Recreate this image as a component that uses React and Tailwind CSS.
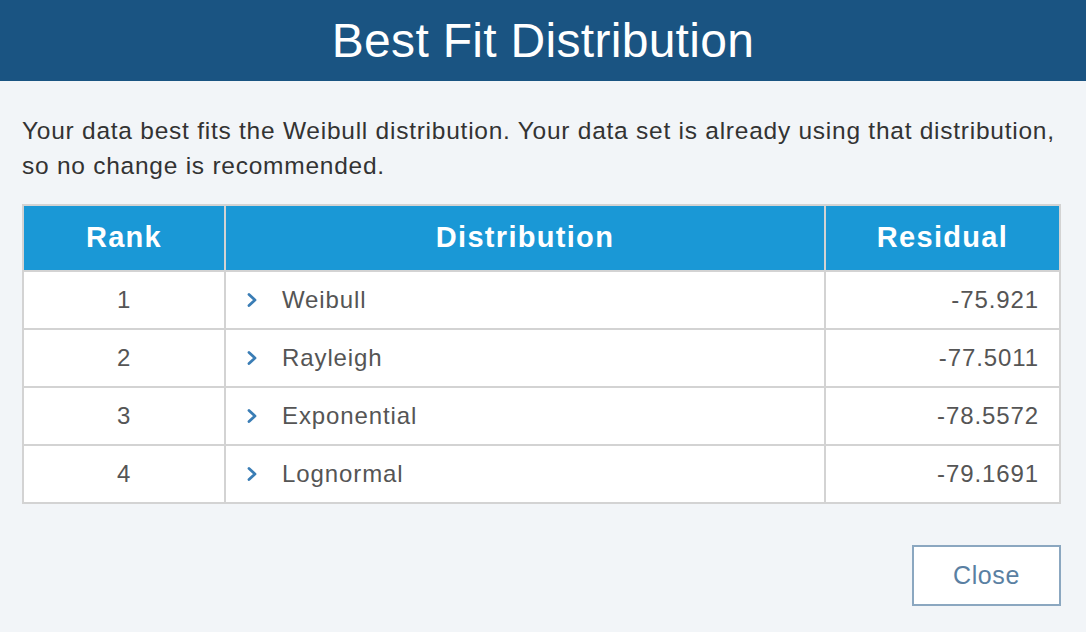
import React from 'react'

const rows = [
  { rank: 1, name: 'Weibull', residual: '-75.921' },
  { rank: 2, name: 'Rayleigh', residual: '-77.5011' },
  { rank: 3, name: 'Exponential', residual: '-78.5572' },
  { rank: 4, name: 'Lognormal', residual: '-79.1691' },
]

const Chevron = () => (
  <svg width="12" height="16" viewBox="0 0 12 16" className="shrink-0">
    <path d="M3 2.5 L9 8 L3 13.5" fill="none" stroke="#3a7db5" strokeWidth="2.8" strokeLinecap="round" strokeLinejoin="round" />
  </svg>
)

const App = () => {
  return (
    <div className="w-[1086px] h-[632px] bg-[#f2f5f8] flex flex-col overflow-hidden" style={{ fontFamily: '"Liberation Sans", Arial, sans-serif' }}>
      <div className="h-[81px] bg-[#1a5482] flex items-center justify-center shrink-0">
        <h1 className="text-white text-[48px] tracking-[0.3px] leading-none">Best Fit Distribution</h1>
      </div>
      <div className="px-[22px] pt-[32px] flex flex-col">
        <p className="text-[24.5px] tracking-[0.75px] leading-[35px] text-[#333] whitespace-nowrap">
          Your data best fits the Weibull distribution. Your data set is already using that distribution,<br />
          so no change is recommended.
        </p>
        <table className="mt-[21px] w-[1039px] border-collapse border-2 border-[#d3d3d3] bg-white">
          <thead>
            <tr className="h-[66px] bg-[#1a98d6] text-white text-[29px] tracking-[1.3px] font-bold">
              <th className="w-[202px] border-2 border-[#d3d3d3] font-bold">Rank</th>
              <th className="w-[600px] border-2 border-[#d3d3d3] font-bold">Distribution</th>
              <th className="border-2 border-[#d3d3d3] font-bold">Residual</th>
            </tr>
          </thead>
          <tbody>
            {rows.map((r) => (
              <tr key={r.rank} className="h-[58px] text-[24px] tracking-[0.9px] text-[#555]">
                <td className="border-2 border-[#d3d3d3] text-center">{r.rank}</td>
                <td className="border-2 border-[#d3d3d3] pl-[20px]">
                  <div className="flex items-center gap-[24px]">
                    <Chevron />
                    <span>{r.name}</span>
                  </div>
                </td>
                <td className="border-2 border-[#d3d3d3] text-right pr-[20px]">{r.residual}</td>
              </tr>
            ))}
          </tbody>
        </table>
        <div className="flex justify-end mt-[41px] pr-[3px]">
          <button className="w-[149px] h-[61px] bg-white border-2 border-[#8ba7c0] text-[#5a80a2] text-[25px] tracking-[0.6px]">Close</button>
        </div>
      </div>
    </div>
  )
}

export default App
